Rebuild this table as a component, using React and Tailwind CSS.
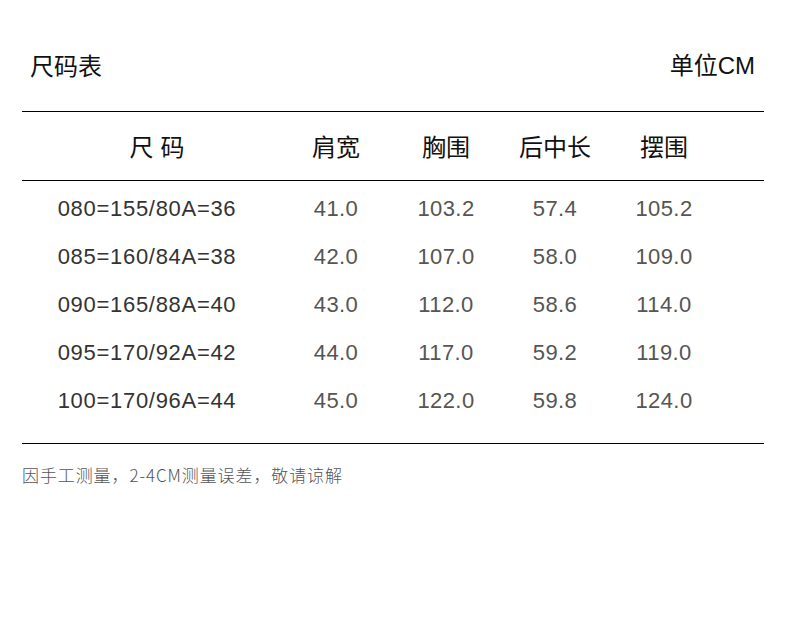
const rows = [
  ['080=155/80A=36', '41.0', '103.2', '57.4', '105.2'],
  ['085=160/84A=38', '42.0', '107.0', '58.0', '109.0'],
  ['090=165/88A=40', '43.0', '112.0', '58.6', '114.0'],
  ['095=170/92A=42', '44.0', '117.0', '59.2', '119.0'],
  ['100=170/96A=44', '45.0', '122.0', '59.8', '124.0'],
]

const cols = 'grid grid-cols-[250px_128px_92px_126px_92px] text-center'

export default function App() {
  return (
    <div className="w-[790px] h-[627px] bg-white font-['Noto_Sans_CJK_SC','Noto_Sans',sans-serif] text-[#111]">
      <div className="flex items-center justify-between pl-[30px] pr-[35px] pt-[40px] h-[111px] pb-[22px] text-[24px]">
        <span>尺码表</span>
        <span>单位<span className="font-['Liberation_Sans',sans-serif]">CM</span></span>
      </div>

      <div className="ml-[22px] w-[742px] border-t border-b border-black">
        <div className={`${cols} h-[68px] items-center text-[24px]`}>
          <div className="pl-[20px] flex justify-center gap-[7px]">
            <span>尺</span>
            <span>码</span>
          </div>
          <div>肩宽</div>
          <div>胸围</div>
          <div>后中长</div>
          <div>摆围</div>
        </div>
      </div>

      <div className="ml-[22px] w-[742px] border-b border-black pt-[3px] pb-[19px]">
        {rows.map((r) => (
          <div key={r[0]} className={`${cols} h-[48px] items-center text-[22px] font-['Liberation_Sans',sans-serif] text-[#555]`}>
            {r.map((c, i) => (
              <div key={i} className={i === 0 ? 'text-[#333] tracking-[0.7px]' : 'tracking-[0.4px]'}>{c}</div>
            ))}
          </div>
        ))}
      </div>

      <div className="pl-[22px] pt-[18px] text-[17px] font-light tracking-[0.9px] text-[#555]">
        因手工测量，2-4CM测量误差，敬请谅解
      </div>
    </div>
  )
}
